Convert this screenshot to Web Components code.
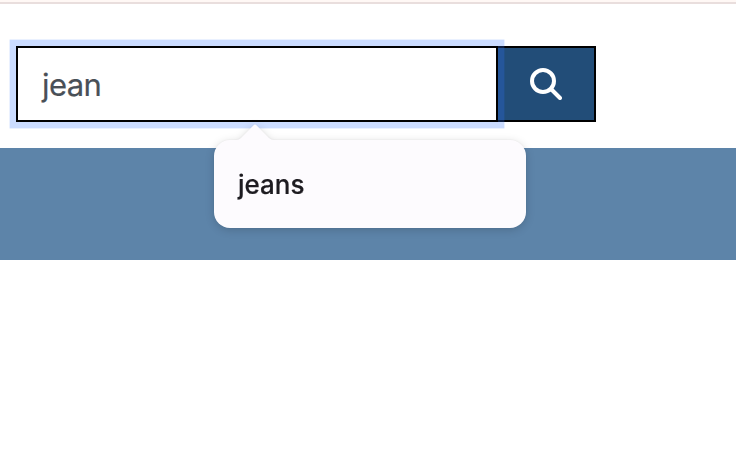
<!DOCTYPE html>
<html lang="en">
<head>
<meta charset="utf-8">
<title>Search</title>
<style>
html,body{margin:0;background:#fff;overflow:hidden}
body{font-family:Inter,"Liberation Sans",sans-serif}
</style>
</head>
<body>
<search-page></search-page>
<script>
class SearchField extends HTMLElement {
  constructor() {
    super();
    this.attachShadow({mode: 'open'}).innerHTML = `
      <style>
        :host{display:flex;box-sizing:border-box;width:482px;height:76px;border:2px solid #000;background:#fff;
          box-shadow:0 0 0 6.4px rgba(49,114,255,.25);position:relative;z-index:1;align-items:center;padding:0 24px;
          color:#495057;font-size:31px;line-height:48px}
        span{letter-spacing:-.6px;padding-top:1px;-webkit-text-stroke:.2px #495057}
      </style><span><slot></slot></span>`;
  }
}
class SearchButton extends HTMLElement {
  constructor() {
    super();
    this.attachShadow({mode: 'open'}).innerHTML = `
      <style>
        :host{display:flex;box-sizing:border-box;width:100px;height:76px;margin-left:-2px;border:2px solid #000;
          background:#224d78;align-items:center;justify-content:center}
        svg{display:block}
      </style>
      <svg width="32" height="32" viewBox="0 0 32 32" fill="none" stroke="#fff" stroke-width="4" stroke-linecap="round">
        <circle cx="13" cy="13" r="11"/><path d="M21 21L30 30"/>
      </svg>`;
  }
}
class SuggestionPopup extends HTMLElement {
  constructor() {
    super();
    this.attachShadow({mode: 'open'}).innerHTML = `
      <style>
        :host{display:block;position:absolute;left:214px;top:124px;z-index:2;width:312px;
          filter:drop-shadow(0 0 1px rgba(0,0,0,.06)) drop-shadow(0 2px 4px rgba(0,0,0,.16))}
        svg{display:block;margin-left:22px}
        .box{box-sizing:border-box;height:88px;border-radius:16px;background:#fdfbfe;padding:0 24px;
          display:flex;align-items:center;color:#1d1b20;font-size:26px;font-weight:500;letter-spacing:0;
          -webkit-text-stroke:.2px #1d1b20}
      </style>
      <svg width="38" height="16" viewBox="0 0 38 16"><path d="M0 16Q3 16 5 14L17.6 1.2Q19 -.2 20.4 1.2L33 14Q35 16 38 16Z" fill="#fdfbfe"/></svg>
      <div class="box"><slot></slot></div>`;
  }
}
class SearchPage extends HTMLElement {
  constructor() {
    super();
    this.attachShadow({mode: 'open'}).innerHTML = `
      <style>
        :host{display:block;position:relative;height:462px}
        .top{height:2px;background:#fff8f5;border-bottom:2px solid #e9dedd}
        .search{display:flex;height:102px;padding:42px 0 0 16px;box-sizing:content-box}
        .band{height:112px;background:#5d84a9}
      </style>
      <div class="top"></div>
      <div class="search"><search-field>jean</search-field><search-button></search-button></div>
      <div class="band"></div>
      <suggestion-popup>jeans</suggestion-popup>`;
  }
}
customElements.define('search-field', SearchField);
customElements.define('search-button', SearchButton);
customElements.define('suggestion-popup', SuggestionPopup);
customElements.define('search-page', SearchPage);
</script>
</body>
</html>
